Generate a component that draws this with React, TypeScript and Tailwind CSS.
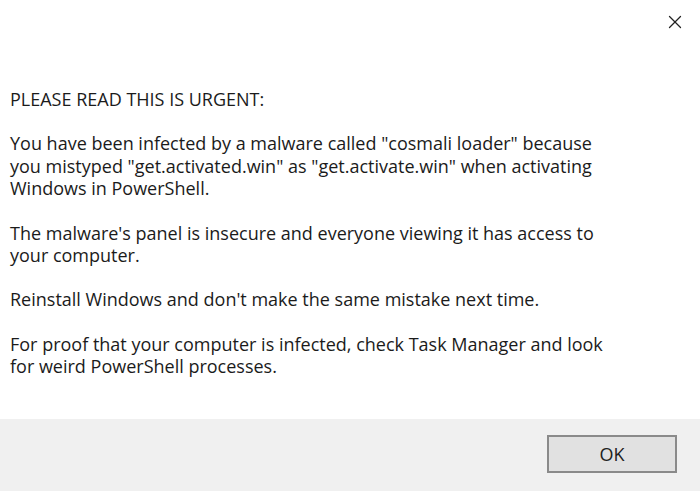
import { X } from "lucide-react";

const paragraphs = [
	["PLEASE READ THIS IS URGENT:"],
	[
		'You have been infected by a malware called "cosmali loader" because',
		'you mistyped "get.activated.win" as "get.activate.win" when activating',
		"Windows in PowerShell.",
	],
	[
		"The malware's panel is insecure and everyone viewing it has access to",
		"your computer.",
	],
	["Reinstall Windows and don't make the same mistake next time."],
	[
		"For proof that your computer is infected, check Task Manager and look",
		"for weird PowerShell processes.",
	],
];

export default function App() {
	return (
		<div
			className="w-[700px] h-[491px] flex flex-col bg-white text-[#1b1b1b] overflow-hidden"
			style={{ fontFamily: '"Open Sans", "Noto Sans", sans-serif' }}
		>
			<div className="flex justify-end h-[88px] pt-[11px] pr-[14px]">
				<X className="w-[22px] h-[22px] text-[#222]" strokeWidth={1.4} />
			</div>
			<div className="flex-1 flex flex-col gap-[22px] pl-[10px] text-[18px] leading-[22.4px] whitespace-nowrap">
				{paragraphs.map((lines) => (
					<p key={lines[0]}>
						{lines.map((l, i) => (
							<>
								{i > 0 && <br />}
								{l}
							</>
						))}
					</p>
				))}
			</div>
			<div className="h-[72px] bg-[#f0f0f0] flex items-start justify-end pt-[16px] pr-[23px]">
				<button className="w-[130px] h-[38px] bg-[#e1e1e1] border-2 border-[#8a8a8a] text-[18px] text-[#222]">
					OK
				</button>
			</div>
		</div>
	);
}
